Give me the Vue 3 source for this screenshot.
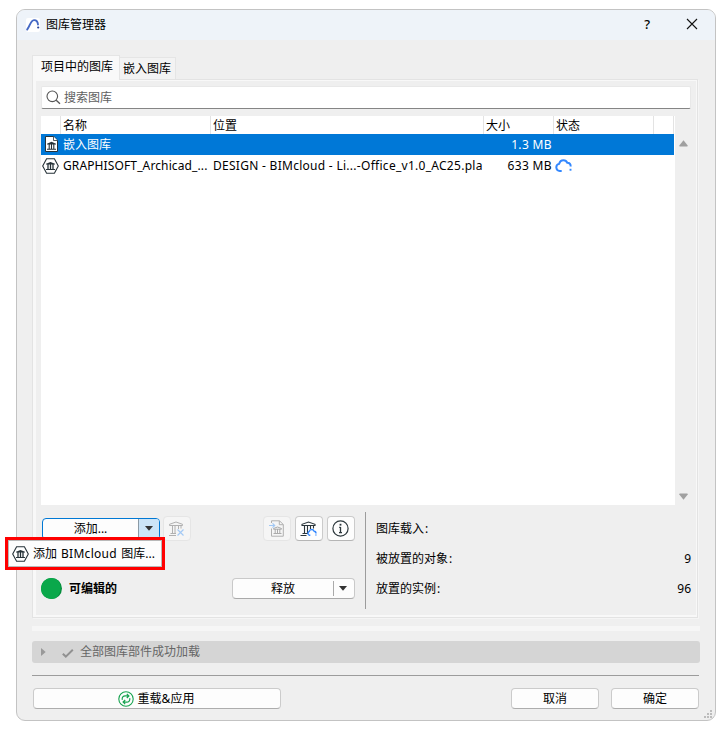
<script setup>
import { ref } from 'vue'

const query = ref('')
const stats = [
  { label: '图库载入', value: '' },
  { label: '被放置的对象', value: '9' },
  { label: '放置的实例', value: '96' },
]
</script>

<template>
  <svg class="defs" width="0" height="0" aria-hidden="true">
    <symbol id="hex" viewBox="0 0 17 16">
      <path d="M4.600.8h7.800L16.300 8l-3.900 7.200H4.600L.7 8z" fill="#fff" stroke="#263238" stroke-width="1.100" />
      <path d="M4 5.700 8.500 4 13 5.700v.7H4zM4 11h9v1H4z" fill="#263238" />
      <path d="M6 6v5M8.500 6v5M11 6v5" stroke="#263238" stroke-width="1.300" />
    </symbol>
    <symbol id="cloud" viewBox="0 0 17 14">
      <path d="M6.700 12H4.800a3.600 3.600 0 0 1-.7-7.100C4.700 2.600 6.300 1.200 8.400 1.200c1.900 0 3.200.9 3.900 2.600 2.200 0 3.400 1.300 3.400 3.700" fill="none" stroke="currentColor" stroke-width="2" />
      <path d="M15.500 9.800v1.900" stroke="currentColor" stroke-width="1.900" />
    </symbol>
  </svg>

  <main class="window">
    <header class="title">
      <svg class="logo" width="14" height="14" viewBox="0 0 14 14">
        <rect width="14" height="14" rx="2" fill="#fff" />
        <path d="M1.200 11.500C3.600 9 4.400 2.400 8 2.100c2.300-.1 3.700 1.400 4 4.400" fill="none" stroke="#4468c4" stroke-width="1.900" stroke-linecap="round" />
        <circle cx="12.200" cy="9.500" r="1.100" fill="#26439b" />
      </svg>
      <span class="name">图库管理器</span>
      <span class="help">?</span>
      <svg class="close" width="12" height="12" viewBox="0 0 12 12"><path d="m1 1 10 10M11 1 1 11" stroke="#111" stroke-width="1.100" /></svg>
    </header>

    <div class="body">
      <nav class="tabs">
        <span class="tab active">项目中的图库</span>
        <span class="tab">嵌入图库</span>
      </nav>

      <section class="panel">
        <label class="search">
          <svg width="15" height="15" viewBox="0 0 15 15"><circle cx="6.300" cy="6.300" r="5.300" fill="none" stroke="#555" stroke-width="1.100" /><path d="m10.200 10.200 3.800 3.600" stroke="#555" stroke-width="1.300" /></svg>
          <span v-if="!query">搜索图库</span>
        </label>

        <div class="list">
          <div class="table">
            <div class="row head">
              <span></span><span>名称</span><span>位置</span><span>大小</span><span>状态</span><span></span>
            </div>
            <div class="row selected">
              <span class="icon">
                <svg width="13" height="16" viewBox="0 0 13 16">
                  <path d="M.5.500h8.300l3.700 3.700v11.300H.5z" fill="#fff" stroke="#263238" />
                  <path d="M8.500.500v4h4" fill="#fff" stroke="#263238" stroke-width=".8" />
                  <path d="M2 7.700 6.500 5.700 11 7.700v.7H2zM2 12.800h9v1H2z" fill="#263238" />
                  <path d="M4.200 8v5M6.500 8v5M8.800 8v5" stroke="#263238" stroke-width="1.100" />
                </svg>
              </span>
              <span>嵌入图库</span><span></span><span class="size">1.3 MB</span><span></span><span></span>
            </div>
            <div class="row">
              <span class="icon hexcell"><svg width="17" height="16"><use href="#hex" /></svg></span>
              <span class="lib">GRAPHISOFT_Archicad_...</span>
              <span class="wide">DESIGN - BIMcloud - Li...-Office_v1.0_AC25.pla</span>
              <span class="size">633 MB</span>
              <span class="status"><svg width="17" height="14"><use href="#cloud" /></svg></span>
              <span></span>
            </div>
          </div>
          <div class="scroll">
            <svg width="9" height="7" viewBox="0 0 9 7"><path d="M4.500.300 8.700 5.500a.8.800 0 0 1-.7 1H1a.8.800 0 0 1-.7-1z" fill="#a0a0a0" /></svg>
            <svg width="9" height="7" viewBox="0 0 9 7"><path d="M4.500 6.700.3 1.500A.8.800 0 0 1 1 .500h7a.8.800 0 0 1 .7 1z" fill="#a0a0a0" /></svg>
          </div>
        </div>

        <div class="lower">
          <div class="controls">
            <div class="tools">
              <div class="split add">
                <span>添加...</span>
                <i><svg width="8" height="5" viewBox="0 0 8 5"><path d="M0 0h8L4 4.700z" fill="#333" /></svg></i>
                <div class="menu">
                  <svg width="17" height="16"><use href="#hex" /></svg>
                  <span>添加 <span class="wide">BIMcloud </span>图库...</span>
                </div>
              </div>
              <span class="tool faded">
                <svg width="17" height="16" viewBox="0 0 17 16">
                  <path d="M1.500 4.500V3.300L8 1l6.500 2.300v1.200zM4.500 4.500V12M7 4.500V12M10.500 4.500V8M13 4.500V7.500M2.500 12.500H8M1 14.500h7" fill="none" stroke="#b0b0b0" />
                  <path d="m9.500 8.500 6 6M15.500 8.500l-6 6" stroke="#a3c9f5" stroke-width="1.200" />
                </svg>
              </span>
              <span class="tool faded embed">
                <svg width="16" height="17" viewBox="0 0 16 17">
                  <path d="M2.500 3V.8h8L14.300 4.500v11.700H2.500V8.500M10.300 1v3.700h4" fill="none" stroke="#b0b0b0" />
                  <path d="M4.500 9.200V8.500l4-1.500 4 1.500v.7zM4.500 13.500h8M6.200 9v4M8.500 9v4M10.800 9v4" fill="none" stroke="#aaa" />
                  <path d="M0 5.500h5.500M3.500 3.300l2.200 2.200-2.200 2.200" fill="none" stroke="#a3c9f5" stroke-width="1.200" />
                </svg>
              </span>
              <span class="tool cloudtool">
                <svg width="17" height="16" viewBox="0 0 17 16">
                  <path d="M2 4.500V3.300L8.500 1 15 3.300v1.200zM4.500 4.500V13M7.500 4.500V13M10.500 4.500V8M13.500 4.500V7.500M2.500 12.500H7M.5 14.500h6" fill="none" stroke="#2b363b" stroke-width="1.100" />
                  <path d="M10.300 14.300h-.8a2 2 0 0 1-.3-3.800c.3-1.300 1.200-2 2.500-2 1.200 0 2 .6 2.400 1.700 1.300.1 1.900.9 1.900 2.200M15.900 13.600v1" fill="none" stroke="#3388ff" stroke-width="1.400" />
                </svg>
              </span>
              <span class="tool info">
                <svg width="17" height="17" viewBox="0 0 17 17"><circle cx="8.500" cy="8.500" r="7.600" fill="none" stroke="#2b363b" stroke-width="1.200" /><path d="M8.500 7v5.500M7 12.700h3M7.200 7.400h1.300" stroke="#2b363b" stroke-width="1.300" /><path d="M8.500 3.800v1.800" stroke="#2b363b" stroke-width="1.800" /></svg>
              </span>
            </div>
            <div class="state">
              <svg width="21" height="21" viewBox="0 0 21 21"><circle cx="10.500" cy="10.500" r="10.500" fill="#058c3c" /><path d="M10.500 0a10.500 10.500 0 1 0 4 20.200A13 13 0 0 0 17.500 2.700 10.500 10.500 0 0 0 10.500 0" fill="#0aa84b" /></svg>
              <b>可编辑的</b>
              <div class="split release">
                <span>释放</span>
                <i><svg width="8" height="5" viewBox="0 0 8 5"><path d="M0 0h8L4 4.700z" fill="#333" /></svg></i>
              </div>
            </div>
          </div>
          <dl class="stats">
            <div v-for="s in stats" :key="s.label"><dt>{{ s.label }}<span class="colon">:</span></dt><dd>{{ s.value }}</dd></div>
          </dl>
        </div>
      </section>

      <div class="strip"></div>
      <div class="report">
        <svg width="5" height="8" viewBox="0 0 5 8"><path d="M0 0v8l4.700-4z" fill="#999" /></svg>
        <svg class="check" width="12" height="9" viewBox="0 0 12 9"><path d="m.8 4.800 3 2.800L10.800.800" fill="none" stroke="#919191" stroke-width="2" /></svg>
        <span>全部图库部件成功加载</span>
      </div>
      <footer class="actions">
        <button class="reload">
          <svg width="16" height="16" viewBox="0 0 16 16">
            <circle cx="8" cy="8" r="7.200" fill="none" stroke="#16a34f" stroke-width="1.100" />
            <path d="M4.300 8.800C3.700 6.400 5.200 4.900 7.300 4.900h3.500M8.800 2.800l2.100 2.100L8.800 7M11.700 7.200c.6 2.400-.9 3.900-3 3.900H5.200M7.200 9l-2.100 2.100 2.100 2.100" fill="none" stroke="#16a34f" stroke-width="1.200" />
          </svg>
          重载&amp;应用
        </button>
        <button>取消</button>
        <button>确定</button>
      </footer>
    </div>
    <svg class="grip" width="8" height="8" viewBox="0 0 8 8"><path d="M6 0h2v2H6zM3 3h2v2H3zM6 3h2v2H6zM0 6h2v2H0zM3 6h2v2H3zM6 6h2v2H6z" fill="#bcbcbc" /></svg>
  </main>
</template>

<style>
body { background: #fff; }
#app {
  height: 729px;
  padding: 9px 9px 8px 16px;
  box-sizing: border-box;
  overflow: hidden;
  position: relative;
}
</style>

<style scoped>
* { box-sizing: border-box; }
svg { display: block; flex: none; }
.defs { position: absolute; }
.window {
  position: relative;
  width: 700px;
  height: 712px;
  border: 1px solid #c3c3c3;
  border-radius: 9px;
  background: #efefef;
  font: 12px/18px "Noto Sans", "Noto Sans CJK SC", sans-serif;
  color: #000;
}
.title {
  height: 30px;
  display: flex;
  align-items: center;
  padding: 0 17px 0 9px;
  border-radius: 8px 8px 0 0;
  background: #eef3f9;
}
.name { margin-left: 6px; flex: 1; }
.help { margin: -2px 36px 0 0; font-size: 13px; font-weight: 500; }
.close { margin-top: -2px; }
.body { padding: 15px 15px 0; }
.tabs { display: flex; align-items: flex-end; height: 24px; }
.tab {
  height: 22px;
  padding: 2px 3px 0;
  width: 56px;
  white-space: nowrap;
  background: #f3f3f3;
  border: 1px solid #e5e5e5;
  border-left: 0;
  border-bottom: 0;
}
.tab.active {
  position: relative;
  z-index: 1;
  width: 88px;
  height: 25px;
  margin-bottom: -1px;
  padding: 2px 0 0 8px;
  background: #f9f9f9;
  border-left: 1px solid #e5e5e5;
}
.panel {
  width: 666px;
  height: 539px;
  border: 1px solid #e3e3e3;
  box-shadow: inset 3px 0 #f8f8f8, inset 0 1px #f8f8f8, inset -1px -2px #f8f8f8, 1px 1px #f5f5f5;
  padding: 6px 6px 0 8px;
}
.search {
  display: flex;
  align-items: center;
  width: 650px;
  height: 23px;
  padding-left: 4px;
  gap: 3px;
  background: #fff;
  border: 1px solid #e8e8e8;
  border-bottom-color: #858585;
  border-radius: 2px;
  color: #606060;
}
.list { display: flex; height: 389px; margin-top: 7px; }
.table { width: 634px; background: #fff; }
.row {
  display: grid;
  grid-template-columns: 20px 150px 273px 70px 100px 20px;
  grid-template-rows: 100%;
  width: 633px;
  height: 21px;
  line-height: 21px;
  white-space: nowrap;
}
.row > span { padding-left: 2px; }
.head { height: 18px; line-height: 20px; }
.head > span { border-right: 1px solid #e3e3e3; }
.selected { background: #0078d7; color: #fff; }
.row > .icon { padding: 2px 0 0 4px; }
.row > .hexcell { padding: 3px 0 0 1px; }
.lib { letter-spacing: 0.12px; }
.wide { letter-spacing: 0.28px; }
.row > .size { text-align: right; padding-right: 2px; letter-spacing: 0.35px; }
.row > .status { padding: 4px 0 0 1px; color: #3388ff; }
.scroll {
  display: flex;
  flex-direction: column;
  justify-content: space-between;
  padding: 24px 0 5px 4px;
}
.lower { display: flex; height: 110px; padding-top: 7px; }
.controls { width: 325px; height: 97px; border-right: 1px solid #9c9c9c; padding: 4px 10px 0 1px; }
.tools { display: flex; height: 25px; align-items: center; }
.split {
  position: relative;
  display: flex;
  align-items: center;
  height: 21px;
  background: #fdfdfd;
  border: 1px solid #c9c9c9;
  border-bottom-color: #aaa;
  border-radius: 4px;
}
.split > span { flex: 1; text-align: center; }
.split > i {
  width: 21px;
  align-self: stretch;
  display: flex;
  align-items: center;
  justify-content: center;
}
.release > i::before { content: ""; width: 1px; height: 15px; background: #aaa; margin-right: 5px; }
.release > i { justify-content: flex-start; }
.add { width: 118px; height: 22px; border-color: #0078d4; margin-top: 1px; }
.add > i { background: #cce4f7; border-left: 1px solid #8b9aa5; border-radius: 0 3px 3px 0; padding: 0 1px 2px 0; }
.tool {
  width: 28px;
  height: 25px;
  display: flex;
  align-items: center;
  justify-content: center;
  background: #fdfdfd;
  border: 1px solid #cbcbcb;
  border-bottom-color: #b5b5b5;
  border-radius: 4px;
  padding-right: 1px;
}
.faded { background: #f5f5f5; border-color: #e5e5e5; margin-left: 3px; }
.embed { margin-left: 72px; }
.cloudtool { margin-left: 4px; }
.info { margin-left: 4px; }
.menu {
  position: absolute;
  z-index: 2;
  left: -38px;
  top: 18px;
  width: 160px;
  height: 33px;
  display: flex;
  align-items: center;
  gap: 4px;
  padding-left: 4px;
  background: #fdfdfd;
  border: 3px solid #f00;
  box-shadow: inset 0 0 0 1px #b9b9b9;
  white-space: nowrap;
}
.menu > span { word-spacing: 0.9px; }
.state { display: flex; align-items: center; height: 21px; margin: 37px 0 0 -1px; }
.state b { margin-left: 7px; flex: 1; }
.state span, .state b { padding-top: 1px; }
.release { width: 123px; }
.stats { flex: 1; margin: 0; padding: 2px 0 0 10px; }
.stats > div { display: flex; justify-content: space-between; height: 30px; line-height: 30px; }
.colon { margin-left: 1px; }
dd { margin: 0; }
.strip { width: 668px; height: 5px; margin-top: 8px; background: #f6f6f6; }
.report {
  display: flex;
  align-items: center;
  width: 668px;
  height: 22px;
  margin-top: 10px;
  padding-left: 9px;
  border-radius: 3px;
  background: #d5d5d5;
  color: #666;
}
.check { margin: 2px 6px 0 16px; }
.actions {
  display: flex;
  width: 667px;
  margin-top: 12px;
  padding: 12px 0 0 1px;
  border-top: 1px solid #9c9c9c;
}
button {
  width: 88px;
  height: 21px;
  padding: 0;
  margin-left: 12px;
  display: flex;
  align-items: center;
  justify-content: center;
  gap: 4px;
  font: inherit;
  color: inherit;
  background: #fdfdfd;
  border: 1px solid #cbcbcb;
  border-bottom-color: #adadad;
  border-radius: 4px;
}
.reload { width: 248px; margin: 0 218px 0 0; padding-right: 2px; }
.grip { position: absolute; right: 3px; bottom: 2px; }
</style>
